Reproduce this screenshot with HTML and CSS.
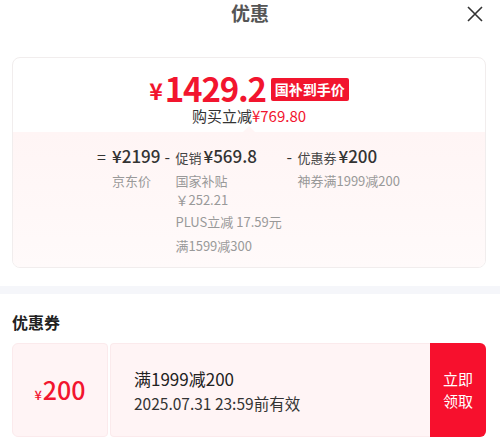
FILE: index.html
```html
<!DOCTYPE html>
<html lang="zh-CN">
<head>
  <meta charset="UTF-8" />
  <meta name="viewport" content="width=device-width, initial-scale=1.0" />
  <title>优惠</title>
  <link rel="stylesheet" href="styles.css">
</head>
<body>
  <div class="header">
    <span></span>
    <h2 class="title">优惠</h2>
    <span class="close">
      <svg width="16" height="16" viewBox="0 0 16 16"><path d="M1 1L15 15M15 1L1 15" stroke="#333" stroke-width="1.6" fill="none"/></svg>
    </span>
  </div>

  <div class="card">
    <div class="card-top">
      <div class="final-price">
        <span class="yen">¥</span><span class="amount">1429.2</span>
        <span class="tag">国补到手价</span>
      </div>
      <div class="saving">购买立减<span class="red">¥769.80</span></div>
    </div>
    <div class="card-bottom">
      <div class="col">
        <span class="op op-eq">=</span>
        <div class="col-body">
          <div class="head"><span class="num">¥2199</span></div>
          <div class="note">京东价</div>
        </div>
      </div>
      <div class="col">
        <span class="op">-</span>
        <div class="col-body col-wide">
          <div class="head"><span class="label">促销</span><span class="num">¥569.8</span></div>
          <div class="note">国家补贴</div>
          <div class="note note-sub">￥252.21</div>
          <div class="note">PLUS立减 17.59元</div>
          <div class="note note-last">满1599减300</div>
        </div>
      </div>
      <div class="col">
        <span class="op">-</span>
        <div class="col-body">
          <div class="head"><span class="label">优惠券</span><span class="num">¥200</span></div>
          <div class="note">神券满1999减200</div>
        </div>
      </div>
    </div>
  </div>

  <div class="gap-band"></div>

  <h3 class="section-title">优惠券</h3>
  <div class="coupon">
    <div class="coupon-value"><span class="small-yen">¥</span>200</div>
    <div class="coupon-info">
      <div class="coupon-name">满1999减200</div>
      <div class="coupon-date">2025.07.31 23:59前有效</div>
    </div>
    <button class="get-btn"><span>立即</span><span>领取</span></button>
  </div>
</body>
</html>
```

FILE: styles.css
```css
* {
  box-sizing: border-box;
  font-family: "Noto Sans CJK SC", "Noto Sans", sans-serif;
}
body {
  margin: 0;
  background: #fff;
  color: #333;
}
.header {
  display: grid;
  grid-template-columns: 1fr auto 1fr;
  align-items: center;
  height: 26px;
}
.title {
  margin: 0;
  font-size: 19px;
  line-height: 26px;
  font-weight: 700;
  color: #555;
}
.close {
  justify-self: end;
  display: flex;
  margin-right: 17px;
  margin-top: 2px;
}
.card {
  margin: 31px 14px 0 12px;
  border: 1px solid #f1eded;
  border-radius: 8px;
  overflow: hidden;
}
.card-top {
  padding: 11px 0 7px;
  text-align: center;
}
.final-price {
  display: flex;
  justify-content: center;
  align-items: center;
  height: 38px;
  line-height: 38px;
  color: #f2152e;
  font-weight: 700;
}
.yen {
  font-size: 23px;
  margin-top: 3px;
  margin-right: 2px;
}
.amount {
  font-size: 33px;
  letter-spacing: -1.2px;
}
.tag {
  margin-left: 5px;
  margin-top: 2px;
  background: #f2152e;
  color: #fff;
  font-size: 14px;
  line-height: 23px;
  padding: 0 4px;
  border-radius: 2px;
}
.saving {
  font-size: 15px;
  line-height: 18px;
  color: #333;
}
.red {
  color: #f2152e;
}
.card-bottom {
  position: relative;
  display: flex;
  gap: 4px;
  padding: 13px 0 12px 84px;
  background: linear-gradient(to bottom, #fff5f5, #fffafa);
}
.card-bottom::before {
  content: "";
  position: absolute;
  top: -6px;
  left: 50%;
  margin-left: -6px;
  border: 6px solid transparent;
  border-top: 0;
  border-bottom-color: #fff5f5;
}
.col {
  display: flex;
}
.op {
  width: 11px;
  font-size: 16px;
  line-height: 22px;
  color: #333;
}
.op-eq {
  width: 15px;
}
.col-wide {
  width: 107px;
  white-space: nowrap;
}
.head {
  display: flex;
  align-items: baseline;
  height: 22px;
  white-space: nowrap;
}
.label {
  font-size: 13px;
  margin-right: 2px;
  color: #444;
}
.num {
  font-size: 17px;
  line-height: 22px;
  font-weight: 500;
  color: #333;
}
.note {
  font-size: 13px;
  line-height: 19px;
  color: #999;
  margin-top: 3px;
}
.head + .note {
  margin-top: 4px;
}
.note-sub {
  margin-top: 0;
}
.note-last {
  margin-top: 5px;
}
.gap-band {
  height: 8px;
  margin-top: 18px;
  background: #f5f6fa;
}
.section-title {
  margin: 16px 12px 0;
  font-size: 16px;
  line-height: 24px;
  font-weight: 700;
  color: #222;
}
.coupon {
  display: flex;
  gap: 2px;
  height: 94px;
  margin: 9px 14px 0 12px;
}
.coupon-value {
  width: 96px;
  display: flex;
  align-items: baseline;
  justify-content: center;
  padding-top: 32px;
  background: #fff4f5;
  border: 1px solid #fbeaec;
  border-radius: 6px 4px 4px 6px;
  color: #f2152e;
  font-size: 25px;
  line-height: 26px;
  font-weight: 500;
}
.small-yen {
  font-size: 13px;
  margin-right: 1px;
}
.coupon-info {
  flex: 1;
  display: flex;
  flex-direction: column;
  justify-content: center;
  padding-left: 23px;
  background: #fff4f5;
  border: 1px solid #fbeaec;
  border-right: 0;
  border-radius: 4px 0 0 4px;
}
.coupon-name {
  font-size: 17px;
  line-height: 25px;
  color: #222;
}
.coupon-date {
  font-size: 15.5px;
  line-height: 24px;
  color: #333;
}
.get-btn {
  width: 56px;
  margin-left: -2px;
  display: flex;
  flex-direction: column;
  align-items: center;
  justify-content: center;
  border: none;
  background: #f7102d;
  color: #fff;
  font-size: 15px;
  line-height: 22px;
  border-radius: 0 6px 6px 0;
  padding: 0;
}
```
